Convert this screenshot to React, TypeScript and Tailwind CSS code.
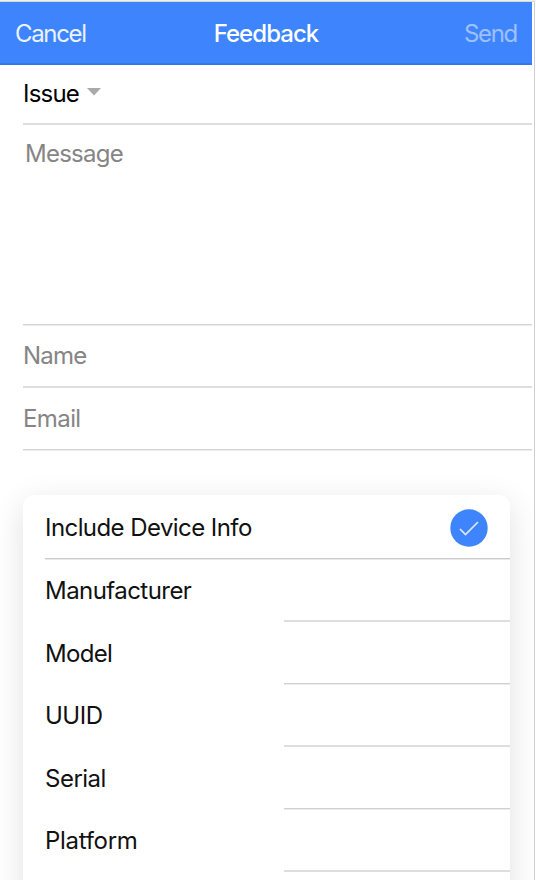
import React from 'react';

const thickLine = 'border-b-2 border-[#dedede]';
const thinLine = 'mb-px border-b border-[#d0d0d2] shadow-[0_1px_0_#ececee]';

const fields = [
  { label: 'Manufacturer', spacing: 'tracking-[-0.55px]', height: 'h-[62px]', pad: 'pt-[16px]', line: thickLine },
  { label: 'Model', spacing: 'tracking-[-0.7px]', height: 'h-[63px]', pad: 'pt-[17px]', line: thinLine },
  { label: 'UUID', spacing: 'tracking-[-0.5px]', height: 'h-[62px]', pad: 'pt-[16px]', line: thickLine },
  { label: 'Serial', spacing: 'tracking-[-0.5px]', height: 'h-[63px]', pad: 'pt-[17px]', line: thinLine },
  { label: 'Platform', spacing: 'tracking-[-0.3px]', height: 'h-[62px]', pad: 'pt-[16px]', line: thickLine },
];

export default function App() {
  return (
    <div className="flex h-[880px] w-[536px] flex-col overflow-hidden border-t border-[#f0f0f0] bg-white font-['Inter',sans-serif] text-[24px] leading-[30px] text-black">
      <div className="flex min-h-0 flex-1">
        <div className="flex w-[534px] shrink-0 flex-col border-t border-[#d8d8d8]">
          <header className="grid h-[63px] w-[532px] shrink-0 grid-cols-3 items-center border-b-2 border-[#3478e6] bg-[#3d84fd] pt-[2px] pr-[15px] pl-[15px] text-white">
            <span className="tracking-[-1.35px] text-white/90">Cancel</span>
            <span className="text-center font-medium tracking-[-0.95px]">Feedback</span>
            <span className="text-right tracking-[-1.3px] text-white/50">Send</span>
          </header>
          <main className="flex w-[532px] flex-col pl-[23px]">
            <div className="flex h-[60px] shrink-0 items-center gap-2 border-b-2 border-[#dedede]">
              <span className="tracking-[-0.8px]">Issue</span>
              <svg width="14" height="8" viewBox="0 0 14 8" className="mb-1 text-[#aaaaaa]">
                <path d="M0 0H14L7 7.5Z" fill="currentColor" />
              </svg>
            </div>
            <div className="h-[200px] shrink-0 border-b border-[#d4d4d4] pt-[14px] pl-[2px] tracking-[-0.75px] text-[#858585] shadow-[0_1px_0_#ececec]">Message</div>
            <div className="flex h-[63px] shrink-0 items-center border-b-2 border-[#dedede] tracking-[-0.8px] text-[#858585]">Name</div>
            <div className="flex h-[62px] shrink-0 items-center border-b border-[#d4d4d4] pt-px tracking-[-0.6px] text-[#858585] shadow-[0_1px_0_#ececec]">Email</div>
          </main>
          <section className="mt-[45px] ml-[23px] flex w-[487px] shrink-0 flex-col rounded-t-[11px] bg-white pl-[22px] text-[#111111] shadow-[0_8px_32px_rgba(0,0,0,0.12)]">
            <div className="mb-px flex h-[64px] shrink-0 items-center justify-between border-b border-[#cbcbcd] pr-[22px] shadow-[0_1px_0_#e8e8e8]">
              <span className="pt-[2px] tracking-[-0.57px]">Include Device Info</span>
              <svg width="38" height="38" viewBox="0 0 38 38" fill="none" className="mt-[3px]">
                <circle cx="19" cy="19" r="18.7" fill="#3d84fd" />
                <path d="M10 20L15.5 25.5L28 13" stroke="#dfeaff" strokeWidth="1.7" />
              </svg>
            </div>
            {fields.map((f) => (
              <div key={f.label} className={`flex shrink-0 ${f.height}`}>
                <span className={`w-[239px] ${f.pad} ${f.spacing}`}>{f.label}</span>
                <span className={`flex-1 ${f.line}`} />
              </div>
            ))}
            <div className="h-[40px] shrink-0" />
          </section>
        </div>
        <div className="w-px bg-[#cfcfcf]" />
      </div>
    </div>
  );
}
